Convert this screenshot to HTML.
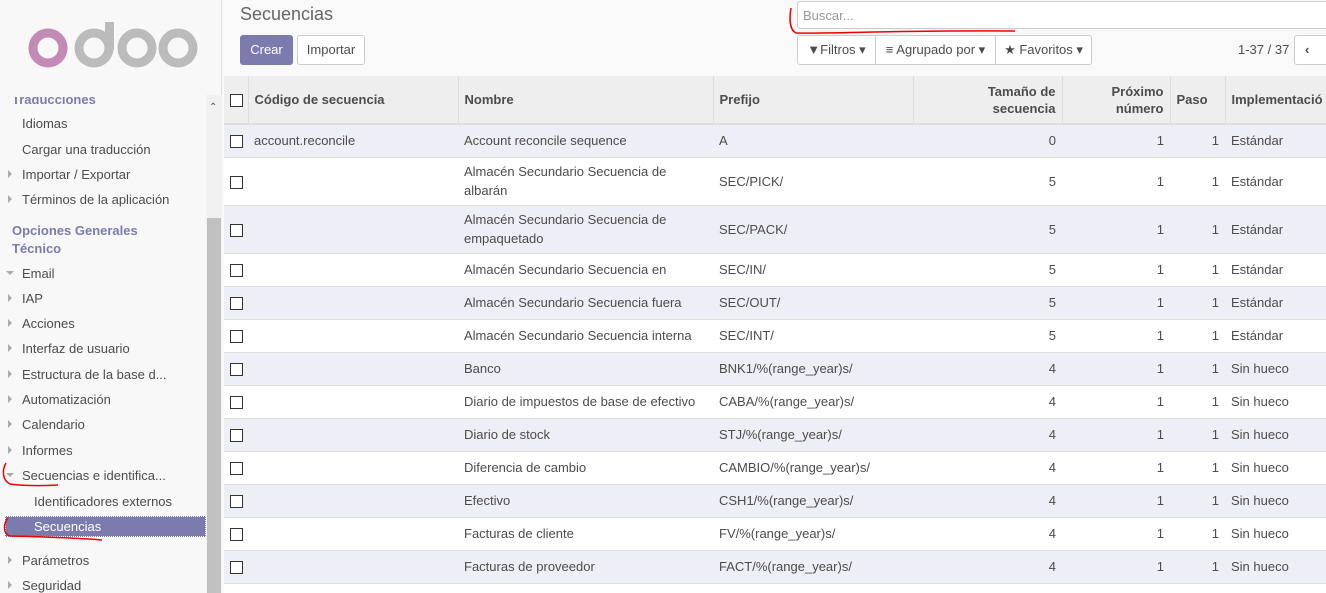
<!DOCTYPE html>
<html><head><meta charset="utf-8"><style>
*{box-sizing:border-box;margin:0;padding:0}
html,body{width:1326px;height:593px;overflow:hidden}
body{background:#f9f9f9;font-family:"Liberation Sans",Arial,sans-serif;font-size:13px;color:#4c4c4c;position:relative}
.abs{position:absolute}
#side{left:0;top:0;width:222px;height:593px;background:#f8f8f8;border-right:1px solid #ddd}
.mi{position:absolute;left:22px;white-space:nowrap}
.tri{position:absolute;left:8px;width:0;height:0;border-top:4px solid transparent;border-bottom:4px solid transparent;border-left:4px solid #aaa}
.trid{position:absolute;left:6px;width:0;height:0;border-left:4px solid transparent;border-right:4px solid transparent;border-top:4px solid #aaa}
.hd{position:absolute;left:12px;color:#7c7bad;font-weight:bold;font-size:13px}
.btn{position:absolute;height:30px;border:1px solid #ccc;background:#fff;border-radius:3px;line-height:28px;text-align:center}
#tw{position:absolute;left:224px;top:76px;width:1102px;height:517px;overflow:hidden}
table{border-collapse:collapse;width:1110px;table-layout:fixed;background:#fff}
th{background:#eee;font-weight:bold;height:48px;border-left:1px solid #ddd;border-bottom:2px solid #ddd;padding:0 6px;text-align:left;line-height:17px;vertical-align:middle}
td{border-top:1px solid #ddd;padding:0 6px;height:33px;vertical-align:middle;line-height:19px;white-space:nowrap}
td.w{white-space:normal}
tr.s td{background:#eeeef6}
.r{text-align:right}
.cb{display:inline-block;width:13px;height:13px;border:1px solid #333;background:#fff;vertical-align:middle}
th:first-child,td:first-child{padding:0 0 0 6px;border-left:none}
</style></head><body>
<div id="side" class="abs">
<svg class="abs" style="left:28px;top:22px" width="170" height="48" viewBox="0 0 170 48">
<circle cx="20" cy="26" r="15" fill="none" stroke="#c38ab6" stroke-width="9"/>
<circle cx="66" cy="26" r="15" fill="none" stroke="#bbb" stroke-width="9"/>
<rect x="77" y="0" width="9" height="28" fill="#bbb"/>
<circle cx="109" cy="26" r="15" fill="none" stroke="#bbb" stroke-width="9"/>
<circle cx="150" cy="26" r="15" fill="none" stroke="#bbb" stroke-width="9"/>
</svg>
<div class="abs" style="left:0;top:97px;width:206px;height:12px;overflow:hidden"><div class="hd" style="top:-5px;">Traducciones</div></div>
<div class="mi" style="top:116px">Idiomas</div>
<div class="mi" style="top:142px">Cargar una traducción</div>
<div class="tri" style="top:170px"></div><div class="mi" style="top:167px">Importar / Exportar</div>
<div class="tri" style="top:195px"></div><div class="mi" style="top:192px">Términos de la aplicación</div>
<div class="hd" style="top:223px">Opciones Generales</div>
<div class="hd" style="top:241px">Técnico</div>
<div class="trid" style="top:271px"></div><div class="mi" style="top:266px">Email</div>
<div class="tri" style="top:294px"></div><div class="mi" style="top:291px">IAP</div>
<div class="tri" style="top:319px"></div><div class="mi" style="top:316px">Acciones</div>
<div class="tri" style="top:344px"></div><div class="mi" style="top:341px">Interfaz de usuario</div>
<div class="tri" style="top:370px"></div><div class="mi" style="top:367px">Estructura de la base d...</div>
<div class="tri" style="top:395px"></div><div class="mi" style="top:392px">Automatización</div>
<div class="tri" style="top:420px"></div><div class="mi" style="top:417px">Calendario</div>
<div class="tri" style="top:446px"></div><div class="mi" style="top:443px">Informes</div>
<div class="trid" style="top:473px"></div><div class="mi" style="top:468px">Secuencias e identifica...</div>
<div class="mi" style="top:494px;left:34px">Identificadores externos</div>
<div class="abs" style="left:5px;top:516px;width:201px;height:21px;background:#7c7bad;border:1px dotted #fff;color:#fff;padding-left:28px;line-height:19px">Secuencias</div>
<div class="tri" style="top:556px"></div><div class="mi" style="top:553px">Parámetros</div>
<div class="tri" style="top:581px"></div><div class="mi" style="top:578px">Seguridad</div>
<div class="abs" style="left:206px;top:95px;width:16px;height:498px;background:#f1f1f1"></div>
<div class="abs" style="left:209px;top:102px;font-size:10px;color:#555">&#8963;</div>
<div class="abs" style="left:207px;top:218px;width:14px;height:375px;background:#c1c1c1"></div>
</div>
<div class="abs" style="left:240px;top:4px;font-size:18px;color:#666">Secuencias</div>
<div class="btn" style="left:240px;top:35px;width:53px;background:#7c7bad;border-color:#7c7bad;color:#fff">Crear</div>
<div class="btn" style="left:297px;top:35px;width:68px">Importar</div>
<div class="abs" style="left:797px;top:1px;width:540px;height:28px;border:1px solid #ccc;background:#fff;border-radius:3px;padding:6px 5px;color:#999">Buscar...</div>
<div class="btn" style="left:797px;top:35px;width:79px;border-radius:3px 0 0 3px">&#9660;Filtros &#9662;</div>
<div class="btn" style="left:875px;top:35px;width:121px;border-radius:0">&#8801; Agrupado por &#9662;</div>
<div class="btn" style="left:995px;top:35px;width:97px;border-radius:0 3px 3px 0">&#9733; Favoritos &#9662;</div>
<div class="abs" style="left:1238px;top:42px">1-37 / 37</div>
<div class="btn" style="left:1294px;top:35px;width:40px;font-weight:bold;text-align:left;padding-left:10px">&#8249;</div>
<div id="tw"><table>
<colgroup><col style="width:24px"><col style="width:210px"><col style="width:255px"><col style="width:200px"><col style="width:149px"><col style="width:108px"><col style="width:55px"><col style="width:109px"></colgroup>
<tr><th><span class="cb"></span></th><th>Código de secuencia</th><th>Nombre</th><th>Prefijo</th><th class="r">Tamaño de<br>secuencia</th><th class="r">Próximo<br>número</th><th>Paso</th><th>Implementació</th></tr>
<tr class="s"><td><span class="cb"></span></td><td>account.reconcile</td><td>Account reconcile sequence</td><td>A</td><td class="r">0</td><td class="r">1</td><td class="r">1</td><td>Estándar</td></tr>
<tr><td style="height:48px"><span class="cb"></span></td><td></td><td class="w">Almacén Secundario Secuencia de albarán</td><td>SEC/PICK/</td><td class="r">5</td><td class="r">1</td><td class="r">1</td><td>Estándar</td></tr>
<tr class="s"><td style="height:48px"><span class="cb"></span></td><td></td><td class="w">Almacén Secundario Secuencia de empaquetado</td><td>SEC/PACK/</td><td class="r">5</td><td class="r">1</td><td class="r">1</td><td>Estándar</td></tr>
<tr><td><span class="cb"></span></td><td></td><td>Almacén Secundario Secuencia en</td><td>SEC/IN/</td><td class="r">5</td><td class="r">1</td><td class="r">1</td><td>Estándar</td></tr>
<tr class="s"><td><span class="cb"></span></td><td></td><td>Almacén Secundario Secuencia fuera</td><td>SEC/OUT/</td><td class="r">5</td><td class="r">1</td><td class="r">1</td><td>Estándar</td></tr>
<tr><td><span class="cb"></span></td><td></td><td>Almacén Secundario Secuencia interna</td><td>SEC/INT/</td><td class="r">5</td><td class="r">1</td><td class="r">1</td><td>Estándar</td></tr>
<tr class="s"><td><span class="cb"></span></td><td></td><td>Banco</td><td>BNK1/%(range_year)s/</td><td class="r">4</td><td class="r">1</td><td class="r">1</td><td>Sin hueco</td></tr>
<tr><td><span class="cb"></span></td><td></td><td>Diario de impuestos de base de efectivo</td><td>CABA/%(range_year)s/</td><td class="r">4</td><td class="r">1</td><td class="r">1</td><td>Sin hueco</td></tr>
<tr class="s"><td><span class="cb"></span></td><td></td><td>Diario de stock</td><td>STJ/%(range_year)s/</td><td class="r">4</td><td class="r">1</td><td class="r">1</td><td>Sin hueco</td></tr>
<tr><td><span class="cb"></span></td><td></td><td>Diferencia de cambio</td><td>CAMBIO/%(range_year)s/</td><td class="r">4</td><td class="r">1</td><td class="r">1</td><td>Sin hueco</td></tr>
<tr class="s"><td><span class="cb"></span></td><td></td><td>Efectivo</td><td>CSH1/%(range_year)s/</td><td class="r">4</td><td class="r">1</td><td class="r">1</td><td>Sin hueco</td></tr>
<tr><td><span class="cb"></span></td><td></td><td>Facturas de cliente</td><td>FV/%(range_year)s/</td><td class="r">4</td><td class="r">1</td><td class="r">1</td><td>Sin hueco</td></tr>
<tr class="s"><td><span class="cb"></span></td><td></td><td>Facturas de proveedor</td><td>FACT/%(range_year)s/</td><td class="r">4</td><td class="r">1</td><td class="r">1</td><td>Sin hueco</td></tr>
<tr><td><span class="cb"></span></td><td></td><td>Mis Compras Secuencia</td><td>WH/IN/</td><td class="r">5</td><td class="r">2</td><td class="r">1</td><td>Estándar</td></tr>
</table></div>
<svg class="abs" style="left:0;top:0" width="1326" height="593">
<path d="M791 8 C789 20 790 30 796 33 C830 34 900 30 1015 31" fill="none" stroke="#e00" stroke-width="1.5"/>
<path d="M6 463 C2 470 2 480 10 484 C25 486 40 486 58 485" fill="none" stroke="#e00" stroke-width="1.5"/>
<path d="M8 518 C3 524 3 534 10 536 C50 537 80 538 102 540" fill="none" stroke="#e00" stroke-width="1.5"/>
</svg>
</body></html>
